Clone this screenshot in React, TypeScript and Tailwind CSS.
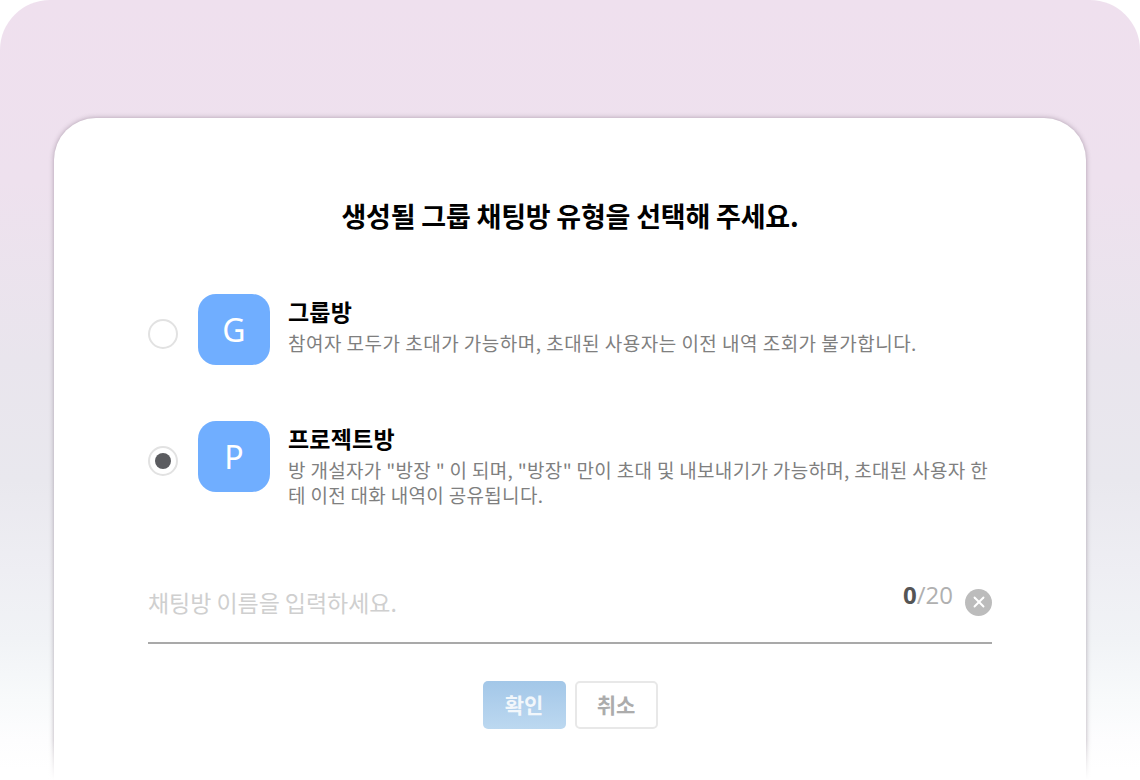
import { X } from "lucide-react";

const FONT = "[font-family:'Noto_Sans_CJK_KR','Noto_Sans',sans-serif]";

function RoomOption({
  letter,
  title,
  desc,
  descClass,
  checked,
}: {
  letter: string;
  title: string;
  desc: string;
  descClass: string;
  checked?: boolean;
}) {
  return (
    <div className="flex items-start">
      <div className="mt-[25px] flex h-[30px] w-[30px] shrink-0 items-center justify-center rounded-full border-2 border-[#e2e2e2] bg-white">
        {checked && <div className="h-4 w-4 rounded-full bg-[#5b5c60]" />}
      </div>
      <div className="ml-[20px] flex h-[71px] w-[72px] shrink-0 items-center justify-center rounded-[18px] bg-[#70aeff] text-[32px] leading-none text-white [font-family:'Noto_Sans',sans-serif]">
        {letter}
      </div>
      <div className="ml-[18px] flex-1 pt-[3px]">
        <div className="text-[23px] leading-[28px] font-bold tracking-[0.2px] text-black">{title}</div>
        <p className={`mt-[5px] text-[19px] leading-[25px] text-[#7f7f7f] [word-break:break-all] ${descClass}`}>{desc}</p>
      </div>
    </div>
  );
}

export default function App() {
  return (
    <div className={`relative h-[780px] w-[1140px] overflow-hidden bg-white ${FONT}`}>
      <div className="h-full rounded-t-[50px] bg-[linear-gradient(180deg,#efe0ee_0px,#eee1ee_180px,#e9e5ed_360px,#e9e8ee_480px,#eeeef3_570px,#f1f3f6_640px,#f8fafb_700px,#fdfdfe_740px,#ffffff_770px)] px-[54px] pt-[118px]">
        <div className="h-[700px] rounded-t-[42px] bg-white px-[94px] pt-[80px] shadow-[0_0_5px_rgba(90,70,90,0.45)]">
          <h1 className="text-center text-[27px] leading-[36px] font-bold tracking-[-0.2px] text-black">
            생성될 그룹 채팅방 유형을 선택해 주세요.
          </h1>

          <div className="mt-[60px]">
            <RoomOption
              letter="G"
              title="그룹방"
              descClass="tracking-[0.48px]"
              desc="참여자 모두가 초대가 가능하며, 초대된 사용자는 이전 내역 조회가 불가합니다."
            />
          </div>
          <div className="mt-[56px]">
            <RoomOption
              letter="P"
              title="프로젝트방"
              checked
              descClass="tracking-[0.32px]"
              desc={'방 개설자가 "방장 " 이 되며, "방장" 만이 초대 및 내보내기가 가능하며, 초대된 사용자 한테 이전 대화 내역이 공유됩니다.'}
            />
          </div>

          <div className="mt-[79px] flex items-center justify-between border-b-2 border-[#a9a9a9] pb-[24px]">
            <span className="text-[23px] leading-[32px] tracking-[-0.05px] text-[#cfcfcf]">채팅방 이름을 입력하세요.</span>
            <div className="flex items-center">
              <span className="-mt-[14px] text-[24px] leading-[32px] text-[#b0b0b0] [font-family:'Open_Sans',sans-serif]">
                <b className="font-bold text-[#555555]">0</b>/20
              </span>
              <span className="ml-[12px] flex h-[27px] w-[27px] items-center justify-center rounded-full bg-[#bcbcbc] text-white">
                <X size={18} strokeWidth={2.5} />
              </span>
            </div>
          </div>

          <div className="mt-[37px] flex justify-center gap-[9px]">
            <button
              type="button"
              className="h-[48px] w-[83px] rounded-[5px] bg-gradient-to-b from-[#a3c7e8] to-[#bcd8f0] text-[21px] font-bold text-[#f2f7fb]"
            >
              확인
            </button>
            <button
              type="button"
              className="h-[48px] w-[83px] rounded-[5px] border-2 border-[#e8e8e8] bg-white text-[21px] font-bold text-[#acacac]"
            >
              취소
            </button>
          </div>
        </div>
      </div>
      {/* fade out at the bottom edge */}
      <div className="pointer-events-none absolute inset-x-0 bottom-0 h-[40px] bg-gradient-to-b from-transparent to-white" />
    </div>
  );
}
